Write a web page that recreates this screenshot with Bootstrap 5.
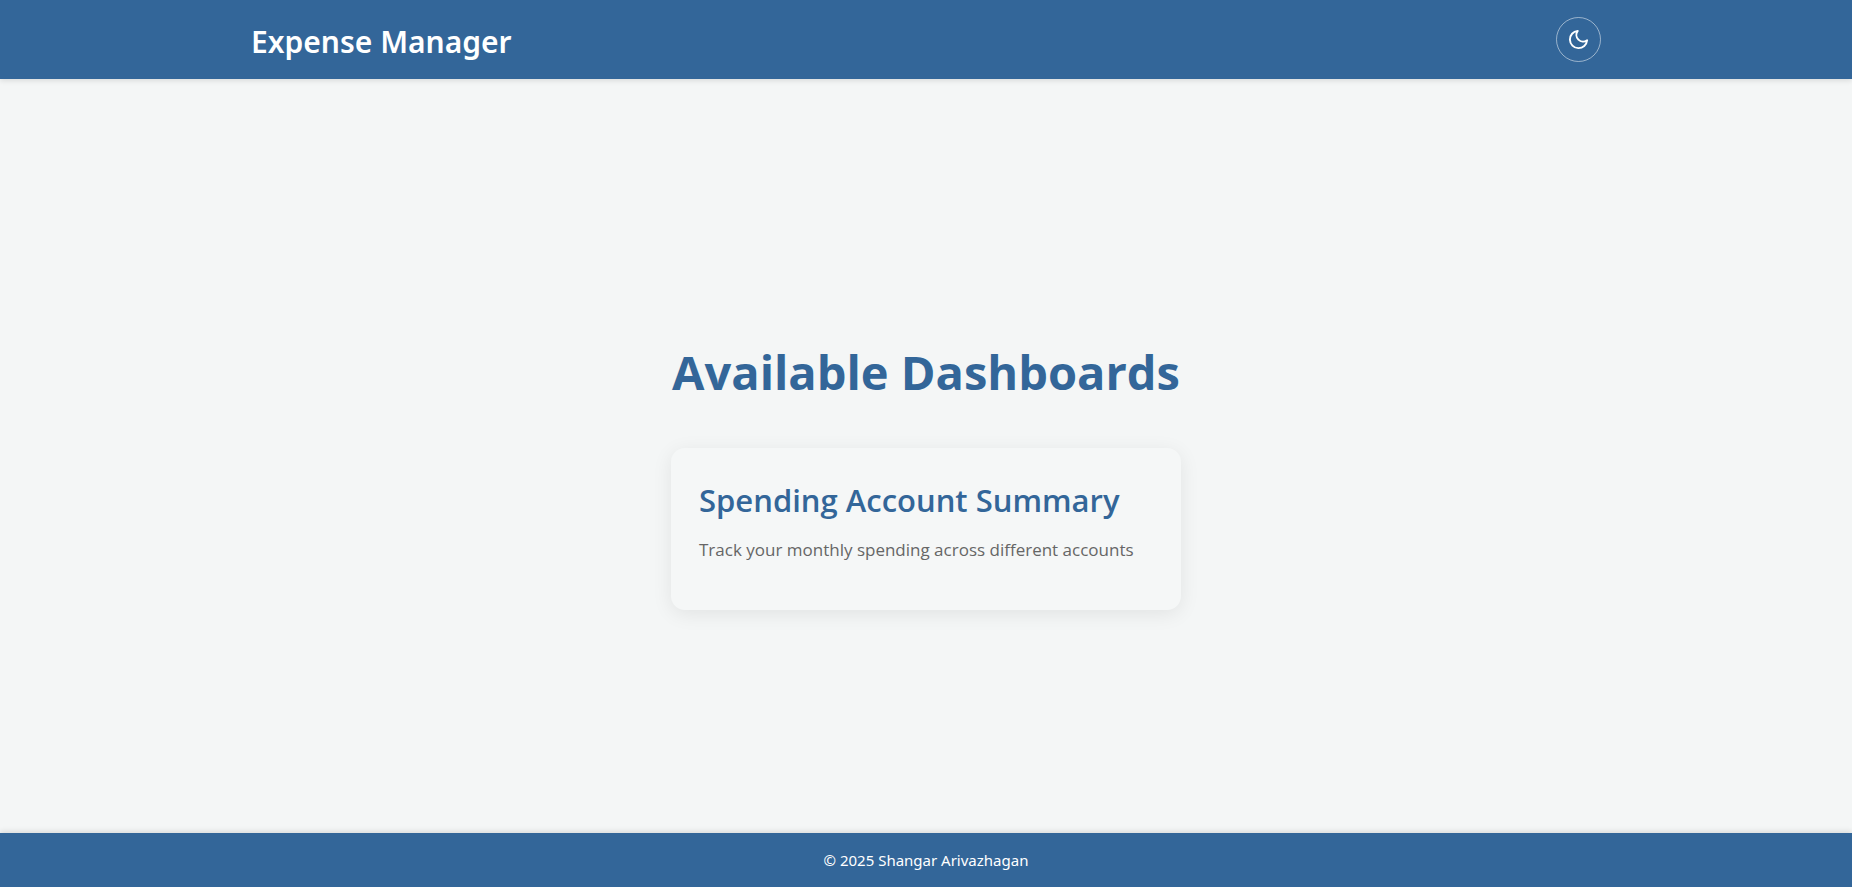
<!DOCTYPE html>
<html lang="en">
<head>
<meta charset="utf-8">
<meta name="viewport" content="width=device-width, initial-scale=1">
<title>Expense Manager</title>
<link href="https://cdn.jsdelivr.net/npm/bootstrap@5.3.0/dist/css/bootstrap.min.css" rel="stylesheet">
<style>
  body { font-family: "Segoe UI", "Open Sans", sans-serif; background: #f4f6f6; }
  .site-bar { background: #336699; color: #fff; font-family: "Segoe UI", "Noto Sans", sans-serif; }
  header.site-bar { box-shadow: 0 2px 5px rgba(0,0,0,.1); }
  footer.site-bar { box-shadow: 0 -2px 5px rgba(0,0,0,.1); font-size: 15px; line-height: 22px; }
  .site-inner { max-width: 1350px; min-height: 79px; }
  .site-title { font-size: 30px; line-height: 40px; font-weight: 600; }
  .theme-toggle { width: 45px; height: 45px; border: 1px solid rgba(255,255,255,.5); color: #fff; background: transparent; }
  .page-title { font-size: 47px; line-height: 64px; font-weight: 700; color: #336699; margin-bottom: 44px; }
  .dashboards { min-width: 510px; padding-top: 38px; }
  .dash-card { background: #f5f7f7; border-radius: 14px; padding: 28px; box-shadow: 0 4px 20px rgba(0,0,0,.08); }
  .dash-title { font-size: 31px; line-height: 48px; font-weight: 600; color: #336699; margin-bottom: 12px; }
  .dash-text { font-size: 17px; line-height: 28px; color: #666; margin-bottom: 18px; }
</style>
</head>
<body class="d-flex flex-column min-vh-100">
<header class="site-bar">
  <div class="site-inner mx-auto d-flex align-items-center justify-content-between">
    <h1 class="site-title mb-0 pt-1">Expense Manager</h1>
    <button type="button" class="theme-toggle btn rounded-circle p-0 d-flex align-items-center justify-content-center" aria-label="Toggle dark mode">
      <svg width="23" height="23" viewBox="0 0 24 24" fill="none" stroke="currentColor" stroke-width="2" stroke-linecap="round" stroke-linejoin="round" aria-hidden="true"><path d="M21 12.79A9 9 0 1 1 11.21 3 7 7 0 0 0 21 12.79z"/></svg>
    </button>
  </div>
</header>
<main class="flex-grow-1 d-flex flex-column align-items-center justify-content-center">
  <div class="dashboards">
    <h2 class="page-title text-center">Available Dashboards</h2>
    <a href="#" class="dash-card d-block text-decoration-none">
      <h3 class="dash-title">Spending Account Summary</h3>
      <p class="dash-text">Track your monthly spending across different accounts</p>
    </a>
  </div>
</main>
<footer class="site-bar text-center py-3">
  <p class="mb-0">© 2025 Shangar Arivazhagan</p>
</footer>
<script src="https://cdn.jsdelivr.net/npm/bootstrap@5.3.0/dist/js/bootstrap.bundle.min.js"></script>
</body>
</html>
